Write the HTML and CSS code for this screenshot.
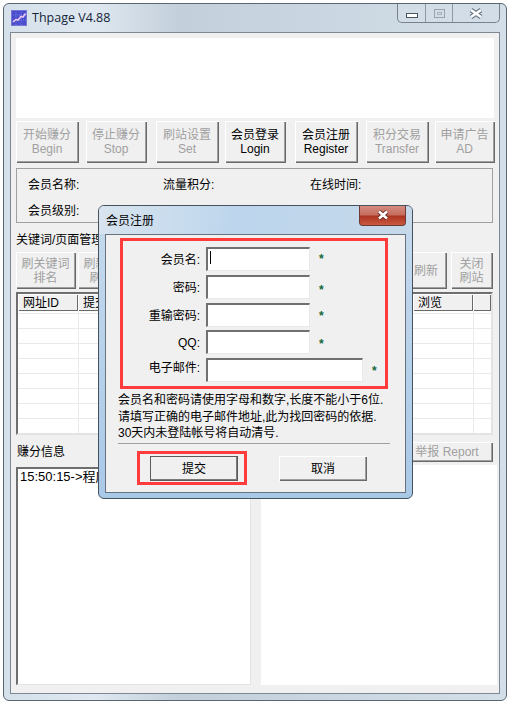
FILE: index.html
```html
<!DOCTYPE html>
<html lang="zh-CN">

<head>
	<meta charset="utf-8">
	<meta name="viewport" content="width=device-width, initial-scale=1.0">
	<title>Thpage V4.88</title>
	<link rel="stylesheet" href="styles.css">
</head>

<body>
	<div class="window">
		<header class="titlebar">
			<svg class="app_icon" width="16" height="16" viewBox="0 0 16 16">
				<rect x="0.5" y="0.5" width="15" height="15" fill="#4a4ecc" stroke="#7478d4" />
				<path d="M0 5H16M0 10H16M5 0V16M10 0V16" stroke="#7076e4" stroke-dasharray="1 1" />
				<path d="M2 12L5 9.5L7 10L10 6.5L12 7L14.5 3.5" fill="none" stroke="#e8c8f0" stroke-width="1.6" />
			</svg>
			<span class="app_title">Thpage V4.88</span>
			<div class="caption">
				<div class="cap_btn cap_min"><i></i></div>
				<div class="cap_btn cap_max"><i></i></div>
				<div class="cap_btn cap_close">
					<svg width="16" height="11" viewBox="0 0 16 11">
						<path d="M3 2L13 9M13 2L3 9" stroke="#6a7682" stroke-width="4.6" />
						<path d="M3 2L13 9M13 2L3 9" stroke="#fff" stroke-width="2.6" />
					</svg>
				</div>
			</div>
		</header>

		<main class="client">
			<div class="banner"></div>

			<nav class="toolbar">
				<button disabled>开始赚分<br>Begin</button>
				<button disabled>停止赚分<br>Stop</button>
				<button disabled>刷站设置<br>Set</button>
				<button>会员登录<br>Login</button>
				<button>会员注册<br>Register</button>
				<button disabled>积分交易<br>Transfer</button>
				<button disabled>申请广告<br>AD</button>
			</nav>

			<section class="member_info">
				<span>会员名称:</span>
				<span>流量积分:</span>
				<span>在线时间:</span>
				<span>会员级别:</span>
			</section>

			<p class="section_label">关键词/页面管理</p>
			<div class="page_tools">
				<button disabled>刷关键词<br>排名</button>
				<button disabled>刷新页面<br>刷流量</button>
				<button class="btn_refresh" disabled>刷新</button>
				<button class="btn_close_site" disabled>关闭<br>刷站</button>
			</div>

			<div class="page_table">
				<div class="table_head">
					<div>网址ID</div>
					<div>提交</div>
					<div>浏览</div>
					<div></div>
				</div>
				<div class="table_body"></div>
			</div>

			<div class="log_head">
				<span>赚分信息</span>
				<button disabled>举报 Report</button>
			</div>

			<div class="log_row">
				<div class="log_box">15:50:15-&gt;程序启动</div>
				<div class="ad_box"></div>
			</div>
		</main>

		<!-- 注册对话框 -->
		<div class="dialog">
			<div class="dialog_title">
				<span>会员注册</span>
				<div class="dialog_close">
					<svg width="16" height="11" viewBox="0 0 16 11">
						<path d="M4 1.5L12 8.5M12 1.5L4 8.5" stroke="#6b2a22" stroke-width="4.4" />
						<path d="M4 1.5L12 8.5M12 1.5L4 8.5" stroke="#fff" stroke-width="2.6" />
					</svg>
				</div>
			</div>
			<div class="dialog_client">
				<form class="reg_fields">
					<div class="field">
						<label>会员名:</label>
						<div class="input_wrap"><input type="text"><span class="caret"></span></div>
						<span class="star">*</span>
					</div>
					<div class="field">
						<label>密码:</label>
						<div class="input_wrap"><input type="password"></div>
						<span class="star">*</span>
					</div>
					<div class="field">
						<label>重输密码:</label>
						<div class="input_wrap"><input type="password"></div>
						<span class="star">*</span>
					</div>
					<div class="field field_qq">
						<label>QQ:</label>
						<div class="input_wrap"><input type="text"></div>
						<span class="star">*</span>
					</div>
					<div class="field field_mail">
						<label>电子邮件:</label>
						<div class="input_wrap"><input type="text"></div>
						<span class="star">*</span>
					</div>
				</form>
				<p class="note">会员名和密码请使用字母和数字,长度不能小于6位.<br>请填写正确的电子邮件地址,此为找回密码的依据.<br>30天内未登陆帐号将自动清号.</p>
				<hr class="separator">
				<div class="dialog_buttons">
					<div class="submit_mark"><button class="btn_default">提交</button></div>
					<button class="btn_cancel">取消</button>
				</div>
			</div>
		</div>
	</div>
</body>

</html>
```

FILE: styles.css
```css
* {
	margin: 0;
	box-sizing: border-box;
}

body {
	background-color: #fff;
	font-family: "Liberation Sans", "Noto Sans CJK SC", sans-serif;
	font-size: 12px;
	line-height: 14px;
	color: #000;
}

button {
	display: block;
	padding: 0;
	border: 0;
	background-color: #f0f0f0;
	font: inherit;
	color: #000;
	box-shadow: inset 1px 1px #fff, inset -1px -1px #696969, inset -2px -2px #a0a0a0;
}

button:disabled {
	color: #a0a0a0;
}

/* hovedvindue */
.window {
	position: relative;
	width: 504px;
	height: 698px;
	margin: 3px 0 0 3px;
	padding: 0 6px 6px;
	border: 1px solid #5b6671;
	border-radius: 6px;
	background: linear-gradient(90deg, #d5e0ea 0%, #dfe8f0 18%, #c3cfdb 35%, #c9d5e0 60%, #d3dee8 100%);
}

.titlebar {
	display: flex;
	align-items: flex-start;
	height: 28px;
}

.app_icon {
	margin: 6px 0 0 1px;
}

.app_title {
	margin: 6px 0 0 5px;
	font-family: "Open Sans", "Liberation Sans", sans-serif;
	font-size: 12.5px;
	line-height: 15px;
	color: #14253a;
}

.caption {
	display: flex;
	width: 103px;
	height: 19px;
	margin-left: auto;
	border: 1px solid #76828e;
	border-top: 0;
	border-radius: 0 0 5px 5px;
	background-color: #d2dde8;
}

.cap_btn {
	display: flex;
	align-items: center;
	justify-content: center;
	border-right: 1px solid #8e9aa6;
}

.cap_min {
	width: 28px;
}

.cap_min i {
	display: block;
	width: 12px;
	height: 5px;
	margin-top: 5px;
	border: 1px solid #4a5560;
	background-color: #fff;
}

.cap_max {
	width: 27px;
}

.cap_max i {
	display: block;
	width: 11px;
	height: 9px;
	border: 1px solid #97a3ae;
	box-shadow: inset 0 0 0 2px #d2dde8, inset 0 0 0 3px #a5b0bb;
}

.cap_close {
	flex: 1;
	border-right: 0;
}

.client {
	height: 662px;
	padding: 5px 2px 0 5px;
	border: 1px solid #7c8893;
	background-color: #f0f0f0;
}

.banner {
	width: 478px;
	height: 80px;
	background-color: #fff;
}

.toolbar {
	display: flex;
	margin-top: 3px;
}

.toolbar button {
	width: 63px;
	height: 42px;
	padding-right: 1px;
}

.toolbar button:nth-child(2) {
	width: 61px;
	margin-left: 7px;
}

.toolbar button:nth-child(3) {
	margin-left: 9px;
}

.toolbar button:nth-child(4) {
	width: 61px;
	margin-left: 6px;
}

.toolbar button:nth-child(5) {
	margin-left: 9px;
}

.toolbar button:nth-child(6) {
	margin-left: 8px;
}

.toolbar button:nth-child(7) {
	width: 60px;
	margin-left: 6px;
}

.member_info {
	display: grid;
	grid-template-columns: 135px 147px 1fr;
	grid-auto-rows: 26px;
	align-items: center;
	width: 477px;
	height: 55px;
	margin-top: 5px;
	padding: 3px 0 0 11px;
	border: 1px solid #a0a0a0;
}

.section_label {
	margin-top: 10px;
}

.page_tools {
	display: flex;
	gap: 2px;
	width: 477px;
	margin-top: 5px;
}

.page_tools button {
	width: 60px;
	height: 37px;
	padding-right: 1px;
}

.page_tools .btn_refresh {
	margin-left: auto;
	width: 57px;
	text-align: right;
	padding-right: 9px;
}

.page_tools .btn_close_site {
	width: 42px;
	margin-left: 2px;
}

.page_table {
	width: 477px;
	height: 143px;
	margin-top: 3px;
	border: 2px solid;
	border-color: #6e6e6e #e3e3e3 #e3e3e3 #6e6e6e;
	background-color: #fff;
}

.table_head {
	display: grid;
	grid-template-columns: 60px 335px 60px 1fr;
	height: 17px;
	background-color: #f0f0f0;
}

.table_head div {
	padding: 2px 0 0 5px;
	box-shadow: inset 1px 1px #fff, inset -1px -1px #696969;
}

.table_body {
	height: 122px;
	background-image:
		linear-gradient(90deg, transparent 60px, #eaeaea 60px, #eaeaea 61px, transparent 61px),
		linear-gradient(90deg, transparent 455px, #eaeaea 455px, #eaeaea 456px, transparent 456px),
		linear-gradient(180deg, transparent 14px, #eaeaea 14px);
	background-size: 100% 100%, 100% 100%, 100% 15px;
	background-position: 0 0, 0 0, 0 3px;
}

.log_head {
	display: flex;
	align-items: center;
	justify-content: space-between;
	width: 477px;
	margin-top: 7px;
}

.log_head span {
	padding-left: 1px;
}

.log_head button {
	width: 92px;
	height: 20px;
}

.log_row {
	display: flex;
	align-items: flex-end;
	margin-top: 3px;
}

.log_box {
	width: 235px;
	height: 218px;
	padding: 0 2px;
	border: 1px solid;
	border-color: #6e6e6e #e3e3e3 #e3e3e3 #6e6e6e;
	border-width: 2px 1px 1px 2px;
	background-color: #fff;
	font-size: 13px;
	line-height: 16px;
}

.ad_box {
	width: 236px;
	height: 220px;
	margin-left: 10px;
	background-color: #fff;
}

/* registreringsdialog */
.dialog {
	position: absolute;
	left: 94px;
	top: 201px;
	width: 315px;
	height: 294px;
	padding: 0 6px 6px;
	border: 1px solid #46525e;
	border-radius: 6px;
	background: linear-gradient(180deg, #c6daed 0%, #a9c9e8 100%);
}

.dialog_title {
	display: flex;
	align-items: flex-start;
	height: 28px;
	background: linear-gradient(100deg, #d8e4ef 0%, #bcd5ec 45%, #c6d9ea 100%);
	margin: 0 -6px;
	padding: 0 6px;
	border-radius: 5px 5px 0 0;
}

.dialog_title span {
	margin: 8px 0 0 1px;
}

.dialog_close {
	display: flex;
	align-items: center;
	justify-content: center;
	width: 47px;
	height: 20px;
	margin-left: auto;
	border: 1px solid #6e3a34;
	border-top: 0;
	border-radius: 0 0 4px 4px;
	background: linear-gradient(180deg, #d58c80 0%, #c56e60 45%, #ae3524 55%, #c85a3e 100%);
}

.dialog_client {
	height: 259px;
	padding: 3px 0 0 14px;
	border: 1px solid #66727e;
	background-color: #f0f0f0;
}

.reg_fields {
	display: flex;
	flex-direction: column;
	gap: 4px;
	width: 268px;
	height: 151px;
	padding-top: 6px;
	border: 3px solid #ff3b3b;
}

.field {
	display: flex;
	align-items: center;
	height: 24px;
}

.field label {
	width: 77px;
	margin-right: 6px;
	padding-top: 2px;
	text-align: right;
}

.input_wrap {
	position: relative;
	width: 104px;
	height: 24px;
}

.input_wrap input {
	display: block;
	width: 100%;
	height: 100%;
	padding: 0;
	border: 2px solid;
	border-color: #707070 #e9e9e9 #e9e9e9 #707070;
	border-width: 2px 1px 1px 2px;
	background-color: #fff;
}

.caret {
	position: absolute;
	left: 4px;
	top: 4px;
	width: 1px;
	height: 13px;
	background-color: #000;
}

.star {
	margin-left: 9px;
	color: #14683a;
	font-weight: bold;
}

.field:nth-child(2) .star {
	margin-top: 6px;
}

.field:nth-child(3) .star {
	margin-top: 2px;
}

.field:nth-child(4) .star {
	margin-top: 4px;
}

.field:nth-child(5) .star {
	margin-top: 2px;
}

.field_qq {
	margin-top: -1px;
}

.field_mail label {
	margin-bottom: 6px;
}

.field_mail .input_wrap {
	width: 157px;
}

.note {
	margin: 3px 0 0 -2px;
	line-height: 16.5px;
	white-space: nowrap;
}

.separator {
	width: 272px;
	height: 1px;
	margin: 1.5px 0 0 -2px;
	border: 0;
	background-color: #a0a0a0;
}

.dialog_buttons {
	display: flex;
	align-items: flex-start;
	margin: 7px 0 0 17px;
}

.submit_mark {
	width: 110px;
	height: 34px;
	padding: 2px 0 0 10px;
	border: 3px solid #ff3b3b;
}

.dialog_buttons button {
	width: 88px;
	height: 25px;
}

.dialog_buttons .btn_default {
	box-shadow: inset 0 0 0 1px #5c5c5c, inset -2px -2px #7a7a7a;
}

.dialog_buttons .btn_cancel {
	margin: 5px 0 0 32px;
}
```
